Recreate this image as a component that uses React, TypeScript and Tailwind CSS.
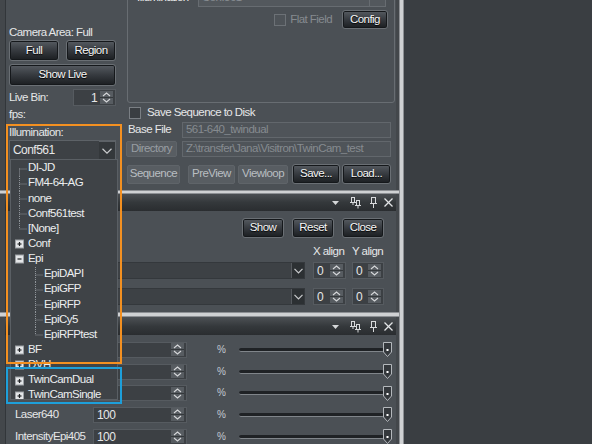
import React from 'react';

const FONT = "font-['Liberation_Sans',Arial,sans-serif]";

function Btn({ children, className = '' }: { children: React.ReactNode; className?: string }) {
  return (
    <div
      className={`flex shrink-0 items-center justify-center rounded-[3px] border border-[#6a6f74] bg-linear-to-b from-[#575c62] via-[#363a3f] to-[#1b1e21] text-[#f6f6f6] shadow-[inset_0_0_0_1px_#15181b] [text-shadow:0_1px_1px_#000] ${className}`}
    >
      {children}
    </div>
  );
}

function FlatBtn({ children, className = '' }: { children: React.ReactNode; className?: string }) {
  return (
    <div
      className={`flex shrink-0 items-center justify-center rounded-[2px] border border-[#5f6469] bg-[#585d62] ${className}`}
    >
      {children}
    </div>
  );
}

function SpinArrows() {
  return (
    <svg width="13" height="13" viewBox="0 0 13 13" className="shrink-0">
      <rect x="0" y="0" width="13" height="13" fill="#575c61" />
      <line x1="0" y1="6.5" x2="13" y2="6.5" stroke="#34383b" />
      <polyline points="3,5 6.5,2 10,5" fill="none" stroke="#d6d8da" strokeWidth="1.1" />
      <polyline points="3,8 6.5,11 10,8" fill="none" stroke="#d6d8da" strokeWidth="1.1" />
    </svg>
  );
}

function Spin({ value, className = '', align = 'left' }: { value: string; className?: string; align?: 'left' | 'right' }) {
  return (
    <div
      className={`flex shrink-0 items-center border border-[#565b60] bg-[#3c4044] pr-[2px] ${className}`}
    >
      <span className={`flex-1 ${align === 'right' ? 'pr-[3px] text-right' : 'pl-[3px]'} text-[12px]`}>{value}</span>
      <SpinArrows />
    </div>
  );
}

function ComboArrow() {
  return (
    <div className="flex h-full w-[13px] shrink-0 items-center justify-center border-l border-[#55595e] bg-[#2c3033]">
      <svg width="9" height="6" viewBox="0 0 9 6">
        <polyline points="0.5,0.8 4.5,5 8.5,0.8" fill="none" stroke="#c9cbcd" strokeWidth="1.2" />
      </svg>
    </div>
  );
}

function Checkbox({ disabled = false }: { disabled?: boolean }) {
  return (
    <div
      className={`h-[12px] w-[12px] shrink-0 border ${disabled ? 'border-[#6c7176] bg-[#4e5358]' : 'border-[#7a7f84] bg-[#3a3e42]'}`}
    />
  );
}

function Header() {
  return (
    <div className="flex h-[17px] shrink-0 items-center justify-end bg-linear-to-b from-[#4a4e52] via-[#34383b] to-[#2a2d30] pr-[3px]">
      <svg width="7" height="4" viewBox="0 0 7 4" className="mr-[11px]">
        <polygon points="0,0 7,0 3.5,4" fill="#d4d6d8" />
      </svg>
      <svg width="11" height="12" viewBox="0 0 11 12" className="mr-[9px]">
        <g fill="none" stroke="#d8dadc" strokeWidth="1">
          <rect x="1.5" y="0.5" width="3" height="5" />
          <line x1="0" y1="5.5" x2="6" y2="5.5" />
          <line x1="3" y1="5.5" x2="3" y2="8" />
          <rect x="6.5" y="3.5" width="3" height="5" />
          <line x1="5" y1="8.5" x2="11" y2="8.5" />
          <line x1="8" y1="8.5" x2="8" y2="11.5" />
        </g>
      </svg>
      <svg width="7" height="11" viewBox="0 0 7 11" className="mr-[7px]">
        <g fill="none" stroke="#d8dadc" strokeWidth="1">
          <rect x="1.5" y="0.5" width="4" height="6" />
          <line x1="0" y1="6.5" x2="7" y2="6.5" />
          <line x1="3.5" y1="6.5" x2="3.5" y2="11" />
        </g>
      </svg>
      <svg width="9" height="9" viewBox="0 0 9 9">
        <g stroke="#e2e4e6" strokeWidth="1.3">
          <line x1="0.5" y1="0.5" x2="8.5" y2="8.5" />
          <line x1="8.5" y1="0.5" x2="0.5" y2="8.5" />
        </g>
      </svg>
    </div>
  );
}

type TreeItem = { t: string; lvl: 0 | 1; box?: '+' | '-'; line?: 'first' | 'mid' | 'last' };

const TREE: TreeItem[] = [
  { t: 'DI-JD', lvl: 0, line: 'first' },
  { t: 'FM4-64-AG', lvl: 0, line: 'mid' },
  { t: 'none', lvl: 0, line: 'mid' },
  { t: 'Conf561test', lvl: 0, line: 'mid' },
  { t: '[None]', lvl: 0, line: 'last' },
  { t: 'Conf', lvl: 0, box: '+' },
  { t: 'Epi', lvl: 0, box: '-' },
  { t: 'EpiDAPI', lvl: 1, line: 'first' },
  { t: 'EpiGFP', lvl: 1, line: 'mid' },
  { t: 'EpiRFP', lvl: 1, line: 'mid' },
  { t: 'EpiCy5', lvl: 1, line: 'mid' },
  { t: 'EpiRFPtest', lvl: 1, line: 'last' },
  { t: 'BF', lvl: 0, box: '+' },
  { t: 'DVH', lvl: 0, box: '+' },
  { t: 'TwinCamDual', lvl: 0, box: '+' },
  { t: 'TwinCamSingle', lvl: 0, box: '+' },
];

function Connector({ item }: { item: TreeItem }) {
  const h = 15;
  const mid = 7.5;
  const w = item.lvl === 0 ? 17 : 33;
  const x = item.lvl === 0 ? 8.5 : 24.5;
  const dot = { stroke: '#8e9398', strokeWidth: 1, strokeDasharray: '1 1' } as const;
  return (
    <svg width={w} height={h} viewBox={`0 0 ${w} ${h}`} className="shrink-0">
      {item.box ? (
        <g>
          <rect x="4.5" y={mid - 3.5} width="8" height="8" fill="#e4e6e8" stroke="#9da1a5" />
          <line x1="6.5" y1={mid + 0.5} x2="10.5" y2={mid + 0.5} stroke="#202326" strokeWidth="1.2" />
          {item.box === '+' && (
            <line x1="8.5" y1={mid - 1.5} x2="8.5" y2={mid + 2.5} stroke="#202326" strokeWidth="1.2" />
          )}
        </g>
      ) : (
        <g>
          <line
            x1={x}
            y1={item.line === 'first' && item.lvl === 0 ? mid : 0}
            x2={x}
            y2={item.line === 'last' ? mid : h}
            {...dot}
          />
          <line x1={x} y1={mid + 0.5} x2={x + 7} y2={mid + 0.5} {...dot} />
        </g>
      )}
    </svg>
  );
}

function Popup() {
  return (
    <div className="absolute left-0 top-full z-20 flex h-[241px] w-[108px] flex-col overflow-hidden border border-[#5a5f64] bg-[#3f4347] pt-[0.5px]">
      {TREE.map((it) => (
        <div key={it.t} className="flex h-[15.15px] shrink-0 items-center whitespace-nowrap text-[#eceeef]">
          <Connector item={it} />
          <span>{it.t}</span>
        </div>
      ))}
    </div>
  );
}

function Panel1() {
  return (
    <div className="flex h-[190px] shrink-0 border-l-[5px] border-r-[3px] border-[#43474b] bg-[#4b5055] pl-[4px] shadow-[inset_1px_0_0_#32363a]">
      <div className="flex w-[108px] shrink-0 flex-col">
        <div className="mt-[27px] flex h-[11px] items-center whitespace-nowrap">Camera Area: Full</div>
        <div className="mt-[2px] flex gap-[7px]">
          <Btn className="h-[21px] w-[50px]">Full</Btn>
          <Btn className="h-[21px] w-[50px]">Region</Btn>
        </div>
        <Btn className="mt-[3px] h-[22px] w-[107px]">Show Live</Btn>
        <div className="mt-[3px] flex h-[17px] w-[107px] items-center justify-between">
          <span>Live Bin:</span>
          <Spin value="1" align="right" className="h-[17px] w-[43px]" />
        </div>
        <div className="mt-[3px] flex h-[12px] items-center">fps:</div>
        <div className="mt-[6px] flex h-[12px] items-center">Illumination:</div>
        <div className="relative mt-[1px] flex h-[20px] w-[107px] items-center border border-[#5d6267] bg-[#3d4145]">
          <span className="flex-1 pl-[3px] text-[12px]">Conf561</span>
          <div className="flex h-full w-[16px] items-center justify-center border-t border-[#5d6267] bg-[#34383b]">
            <svg width="10" height="6" viewBox="0 0 10 6">
              <polyline points="0.5,0.8 5,5.2 9.5,0.8" fill="none" stroke="#c9cbcd" strokeWidth="1.2" />
            </svg>
          </div>
          <Popup />
        </div>
      </div>
      <div className="ml-[9px] flex w-[269px] shrink-0 flex-col">
        <div className="-mt-[22px] ml-[1px] flex h-[125px] flex-col rounded-[3px] border border-[#686d72] pl-[9px] pr-[8px] pt-[9px]">
          <div className="flex h-[19px] items-center">
            <span className="w-[61px] shrink-0 text-[#eeeeee]">Illumination</span>
            <div className="flex h-[19px] w-[188px] items-center border border-[#676c71] bg-[#53585d]">
              <span className="flex-1 pl-[3px] text-[#8a8f94]">Conf561</span>
              <div className="h-full w-[16px] border-l border-[#676c71]" />
            </div>
          </div>
          <div className="-mr-[2px] mt-[3px] flex h-[19px] items-center justify-end">
            <Checkbox disabled />
            <span className="ml-[4px] text-[#868b90]">Flat Field</span>
            <Btn className="ml-[10px] h-[19px] w-[46px]">Config</Btn>
          </div>
        </div>
        <div className="mt-[3px] flex h-[13px] items-center pl-[3px]">
          <Checkbox />
          <span className="ml-[6px] whitespace-nowrap">Save Sequence to Disk</span>
        </div>
        <div className="mt-[3px] flex h-[16px] items-center">
          <span className="w-[56px] shrink-0 pl-[2px]">Base File</span>
          <div className="flex h-[16px] w-[209px] items-center border border-[#62676c] bg-[#4f5459] pl-[3px] text-[#868b90]">
            561-640_twindual
          </div>
        </div>
        <div className="mt-[3px] flex h-[16px] items-center">
          <FlatBtn className="h-[16px] w-[51px] text-[#999ea3]">Directory</FlatBtn>
          <div className="ml-[5px] flex h-[16px] w-[209px] items-center whitespace-nowrap border border-[#62676c] bg-[#4f5459] pl-[3px] text-[#868b90]">
            Z:\transfer\Jana\Visitron\TwinCam_test
          </div>
        </div>
        <div className="mt-[7px] flex h-[20px] items-center">
          <FlatBtn className="ml-[1px] h-[19px] w-[53px] text-[#b9bdc1]">Sequence</FlatBtn>
          <FlatBtn className="ml-[8px] h-[19px] w-[47px] text-[#b9bdc1]">PreView</FlatBtn>
          <FlatBtn className="ml-[3px] h-[19px] w-[50px] text-[#b9bdc1]">Viewloop</FlatBtn>
          <Btn className="ml-[4px] h-[20px] w-[48px]">Save...</Btn>
          <Btn className="ml-[2px] h-[20px] w-[49px]">Load...</Btn>
        </div>
      </div>
    </div>
  );
}

function ComboRow() {
  return (
    <div className="flex h-[17px] items-center justify-end pr-[12px]">
      <div className="flex h-[17px] w-[209px] items-center border border-[#34383c] bg-[#3d4145]">
        <div className="flex-1" />
        <ComboArrow />
      </div>
      <Spin value="0" className="ml-[8px] h-[17px] w-[33px]" />
      <Spin value="0" className="ml-[6px] h-[17px] w-[32px]" />
    </div>
  );
}

function Panel2() {
  return (
    <div className="flex h-[118px] shrink-0 flex-col border-l-[5px] border-r-[3px] border-[#43474b] bg-[#4b5055] shadow-[inset_1px_0_0_#32363a]">
      <Header />
      <div className="mt-[7px] flex justify-end gap-[8px] pr-[12px]">
        <Btn className="h-[20px] w-[42px]">Show</Btn>
        <Btn className="h-[20px] w-[42px]">Reset</Btn>
        <Btn className="h-[20px] w-[42px]">Close</Btn>
      </div>
      <div className="mt-[8px] flex h-[12px] items-center justify-end whitespace-nowrap pr-[12px]">
        <span className="w-[39px]">X align</span>
        <span className="w-[32px]">Y align</span>
      </div>
      <div className="mt-[4px]">
        <ComboRow />
      </div>
      <div className="mt-[9px]">
        <ComboRow />
      </div>
    </div>
  );
}

const ROWS = [
  { l: '', v: '' },
  { l: '', v: '' },
  { l: '', v: '' },
  { l: 'Laser640', v: '100' },
  { l: 'IntensityEpi405', v: '100' },
];

function Slider() {
  return (
    <div className="flex w-[153px] shrink-0 items-center">
      <div className="h-[4px] flex-1 rounded-[2px] border-b border-[#80858a] bg-[#1f2225]" />
      <svg width="9" height="15" viewBox="0 0 9 15" className="-ml-[1px] shrink-0">
        <path d="M0.5 0.5 H8.5 V10 L4.5 14.5 L0.5 10 Z" fill="#34383c" stroke="#b4b8bc" strokeWidth="1" />
        <rect x="3.5" y="7" width="2" height="2" fill="#ffffff" />
      </svg>
    </div>
  );
}

function Panel3() {
  return (
    <div className="flex flex-1 flex-col border-l-[5px] border-r-[3px] border-[#43474b] bg-[#4b5055] shadow-[inset_1px_0_0_#32363a]">
      <div className="mt-[1px]">
        <Header />
      </div>
      <div className="flex flex-col pt-[4px]">
        {ROWS.map((r, i) => (
          <div key={i} className="flex h-[21.7px] shrink-0 items-center pl-[10px]">
            <span className="w-[78px] shrink-0 whitespace-nowrap">{r.l}</span>
            <Spin value={r.v} className="h-[16px] w-[94px]" />
            <span className="ml-[30px] w-[8px] text-[10px] text-[#c3cad2]">%</span>
            <div className="ml-[14px]">
              <Slider />
            </div>
          </div>
        ))}
      </div>
    </div>
  );
}

export default function App() {
  return (
    <div
      className={`relative flex h-[444px] w-[592px] overflow-hidden bg-[#3a3e42] text-[11.5px] leading-none tracking-[-0.55px] text-[#e6e7e8] ${FONT}`}
    >
      <div className="flex w-[399px] shrink-0 flex-col bg-[#43474b]">
        <Panel1 />
        <div className="h-[4px] shrink-0 border-y border-[#8d9094] bg-[#cfd1d3]" />
        <Panel2 />
        <div className="h-[5px] shrink-0 border-y border-[#8d9094] bg-[#cfd1d3]" />
        <Panel3 />
      </div>
      <div className="w-[5px] shrink-0 border-x border-[#8d9094] bg-[#cfd1d3]" />
      <div className="flex-1 bg-[#3a3e42]" />
      <div className="pointer-events-none absolute left-[6px] top-[124px] z-30 h-[240px] w-[116px] border-2 border-[#f39021]" />
      <div className="pointer-events-none absolute left-[6px] top-[367px] z-30 h-[37px] w-[116px] border-2 border-[#1d9fda]" />
    </div>
  );
}
